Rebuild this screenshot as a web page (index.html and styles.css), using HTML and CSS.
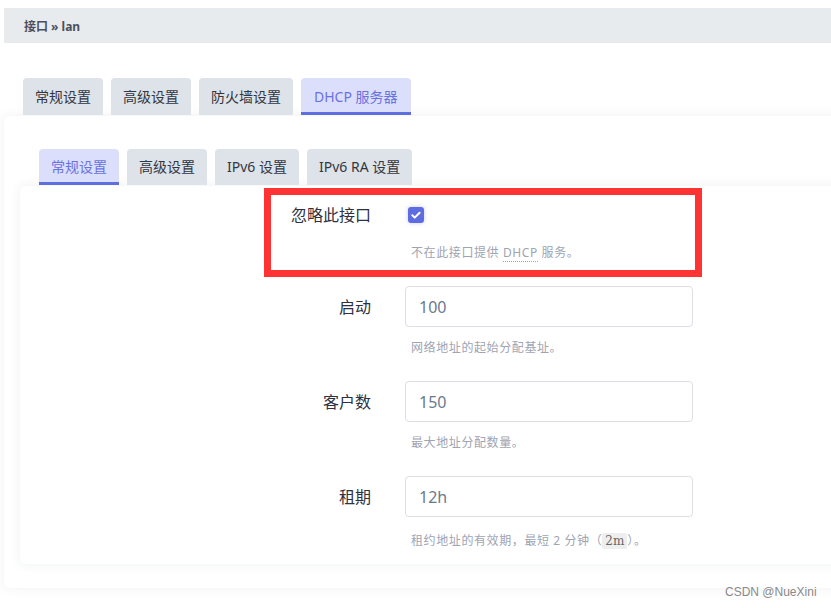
FILE: index.html
```html
<!DOCTYPE html>
<html lang="zh-CN">
<head>
<meta charset="utf-8">
<title>接口 » lan</title>
<link rel="stylesheet" href="styles.css">
</head>
<body>
<div class="page">
  <div class="crumbbar">接口 » lan</div>
  <div class="tabs main">
    <div class="tab">常规设置</div>
    <div class="tab">高级设置</div>
    <div class="tab">防火墙设置</div>
    <div class="tab active">DHCP 服务器</div>
  </div>
  <div class="panel">
    <div class="tabs sub">
      <div class="tab active">常规设置</div>
      <div class="tab">高级设置</div>
      <div class="tab">IPv6 设置</div>
      <div class="tab">IPv6 RA 设置</div>
    </div>
    <div class="subpanel">
      <div class="row first">
        <div class="label">忽略此接口</div>
        <div class="field check-field">
          <span class="checkbox"><svg width="16" height="16" viewBox="0 0 16 16"><path d="M4.3 8.3l2.4 2.3 4.9-4.9" fill="none" stroke="#fff" stroke-width="2" stroke-linecap="round" stroke-linejoin="round"/></svg></span>
        </div>
        <div class="desc">不在此接口提供 <abbr class="abbr">DHCP</abbr> 服务。</div>
      </div>
      <div class="row">
        <div class="label">启动</div>
        <div class="field"><div class="input">100</div></div>
        <div class="desc">网络地址的起始分配基址。</div>
      </div>
      <div class="row">
        <div class="label">客户数</div>
        <div class="field"><div class="input">150</div></div>
        <div class="desc">最大地址分配数量。</div>
      </div>
      <div class="row last">
        <div class="label">租期</div>
        <div class="field"><div class="input">12h</div></div>
        <div class="desc">租约地址的有效期，最短 2 分钟（<code class="code">2m</code>）。</div>
      </div>
    </div>
  </div>
  <div class="highlight"></div>
  <div class="watermark">CSDN @NueXini</div>
</div>
</body>
</html>
```

FILE: styles.css
```css
html, body {
  margin: 0;
  padding: 0;
  background: #ffffff;
  overflow: hidden;
}
body {
  font-family: "Noto Sans", "Noto Sans CJK SC", sans-serif;
  color: #2f3341;
}
.page {
  position: relative;
  width: 860px;
  padding: 8px 0 0 4px;
  height: 600px;
}
.crumbbar {
  height: 35px;
  background: #e8ebee;
  padding-left: 20px;
  display: flex;
  align-items: center;
  font-size: 12px;
  font-weight: 700;
  color: #4b5060;
}
.tabs {
  display: flex;
  gap: 8px;
  margin-top: 35px;
  padding-left: 19px;
}
.tab {
  height: 37px;
  line-height: 37px;
  padding: 0 12px;
  background: #dee3e9;
  border-radius: 4px 4px 0 0;
  font-size: 14px;
  color: #333640;
  white-space: nowrap;
}
.tab.active {
  background: #dcdffc;
  color: #6a72e0;
  box-shadow: inset 0 -3px 0 #5f6fe0;
}
.tabs.main .tab.active {
  padding: 0 13px;
}
.panel {
  margin-top: 1px;
  background: #fff;
  border-radius: 6px;
  box-shadow: 0 0 12px rgba(40, 60, 90, 0.07);
  padding: 33px 0 24px 16px;
}
.tabs.sub {
  margin-top: 0;
}
.tabs.sub .tab {
  height: 36px;
  line-height: 36px;
}
.subpanel {
  margin-top: 1px;
  background: #fff;
  border-radius: 6px;
  box-shadow: 0 0 12px rgba(40, 60, 90, 0.08);
  padding: 8px 0 14px 0;
}
.row {
  display: grid;
  grid-template-columns: 351px 288px;
  column-gap: 34px;
  margin-top: 24px;
}
.row.first {
  margin-top: 0;
}
.label {
  height: 40px;
  display: flex;
  align-items: center;
  justify-content: flex-end;
  font-size: 16px;
  color: #2e3142;
}
.field {
  height: 41px;
}
.check-field {
  display: flex;
  align-items: center;
  padding-left: 3px;
}
.checkbox {
  width: 16px;
  height: 16px;
  border-radius: 3px;
  background: #5f6ce0;
  box-shadow: 0 0 4px rgba(95, 108, 224, 0.35);
  display: block;
}
.checkbox svg {
  display: block;
}
.input {
  box-sizing: border-box;
  height: 41px;
  border: 1px solid #dcdfe6;
  border-radius: 4px;
  padding-left: 13px;
  display: flex;
  align-items: center;
  font-size: 16px;
  color: #6b7a8d;
}
.desc {
  grid-column: 2;
  margin-top: 12px;
  padding-left: 6px;
  font-size: 12px;
  line-height: 18px;
  color: #a0a4b2;
  letter-spacing: 0.6px;
  white-space: nowrap;
}
.row.first .desc {
  margin-top: 9px;
}
.row.last .desc {
  margin-top: 15px;
}
.abbr {
  text-decoration: none;
  border-bottom: 1px dotted #a0a4b2;
}
.code {
  font-family: "DejaVu Serif", "Liberation Serif", serif;
  font-size: 12px;
  letter-spacing: 0;
  background: #eeeeee;
  color: #666;
  padding: 1px 3px;
  border-radius: 2px;
}
.highlight {
  position: absolute;
  left: 264px;
  top: 188px;
  width: 438px;
  height: 89px;
  box-sizing: border-box;
  border: 7px solid #fe3434;
}
.watermark {
  position: absolute;
  left: 725px;
  top: 585px;
  font-family: "Liberation Sans", sans-serif;
  font-size: 12px;
  color: #8a8a8a;
}
```
